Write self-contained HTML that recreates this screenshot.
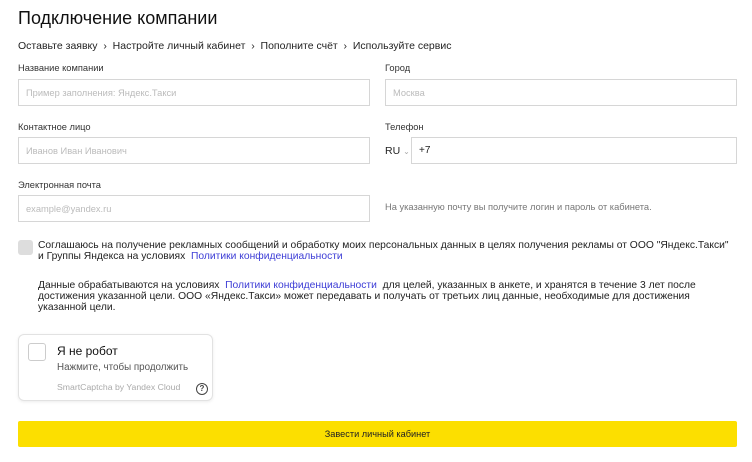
<!DOCTYPE html>
<html><head><meta charset="utf-8"><style>
*{box-sizing:border-box;margin:0;padding:0}
body{width:752px;height:462px;background:#fff;font-family:"Liberation Sans","DejaVu Sans",sans-serif;color:#222;position:relative;overflow:hidden}
.a{position:absolute;white-space:nowrap}
.lbl{font-size:9.3px;color:#333}
.inp{position:absolute;height:27px;border:1px solid #d6d6d6;font-size:9.3px;color:#bbb;padding:8px 0 0 7px}
.t{font-size:10.3px;line-height:11px;color:#222}
.link{color:#3d3dd6}
</style></head><body>
<div class="a" style="left:18px;top:8px;font-size:18px;color:#111">Подключение компании</div>
<div class="a" style="left:18px;top:40px;font-size:10.5px;color:#222">Оставьте заявку &nbsp;›&nbsp; Настройте личный кабинет &nbsp;›&nbsp; Пополните счёт &nbsp;›&nbsp; Используйте сервис</div>
<div class="a lbl" style="left:18px;top:63px">Название компании</div>
<div class="inp" style="left:18px;top:79px;width:352px">Пример заполнения: Яндекс.Такси</div>
<div class="a lbl" style="left:385px;top:63px">Город</div>
<div class="inp" style="left:385px;top:79px;width:352px">Москва</div>
<div class="a lbl" style="left:18px;top:122px">Контактное лицо</div>
<div class="inp" style="left:18px;top:137px;width:352px">Иванов Иван Иванович</div>
<div class="a lbl" style="left:385px;top:122px">Телефон</div>
<div class="a" style="left:385px;top:145px;font-size:10.5px">RU <span style="color:#aaa;font-size:8px">⌄</span></div>
<div class="inp" style="left:411px;top:137px;width:326px;color:#222;font-size:10px;padding-top:7px">+7</div>
<div class="a lbl" style="left:18px;top:180px">Электронная почта</div>
<div class="inp" style="left:18px;top:195px;width:352px">example@yandex.ru</div>
<div class="a" style="left:385px;top:202px;font-size:9.3px;color:#777">На указанную почту вы получите логин и пароль от кабинета.</div>
<div class="a" style="left:18px;top:240px;width:15px;height:15px;background:#ddd;border-radius:3px"></div>
<div class="a t" style="left:38px;top:240px">Соглашаюсь на получение рекламных сообщений и обработку моих персональных данных в целях получения рекламы от ООО "Яндекс.Такси"<br>и Группы Яндекса на условиях &nbsp;<span class="link">Политики конфиденциальности</span></div>
<div class="a t" style="left:38px;top:280px">Данные обрабатываются на условиях &nbsp;<span class="link">Политики конфиденциальности</span>&nbsp; для целей, указанных в анкете, и хранятся в течение 3 лет после<br>достижения указанной цели. ООО «Яндекс.Такси» может передавать и получать от третьих лиц данные, необходимые для достижения<br>указанной цели.</div>
<div class="a" style="left:18px;top:334px;width:195px;height:67px;border:1px solid #e2e2e2;border-radius:6px;box-shadow:0 1px 3px rgba(0,0,0,.08)"></div>
<div class="a" style="left:28px;top:343px;width:18px;height:18px;border:1px solid #ccc;border-radius:3px"></div>
<div class="a" style="left:57px;top:344px;font-size:12px;color:#111">Я не робот</div>
<div class="a" style="left:57px;top:362px;font-size:9.8px;color:#555">Нажмите, чтобы продолжить</div>
<div class="a" style="left:57px;top:382px;font-size:8.7px;color:#aaa">SmartCaptcha by Yandex Cloud</div>
<div class="a" style="left:196px;top:383px;width:12px;height:12px;border:1.3px solid #444;border-radius:50%;font-size:8px;font-weight:bold;text-align:center;line-height:10px;color:#444">?</div>
<div class="a" style="left:18px;top:421px;width:719px;height:26px;background:#fcdf00;border-radius:2px;font-size:9.2px;text-align:center;line-height:26px;color:#222">Завести личный кабинет</div>
</body></html>
